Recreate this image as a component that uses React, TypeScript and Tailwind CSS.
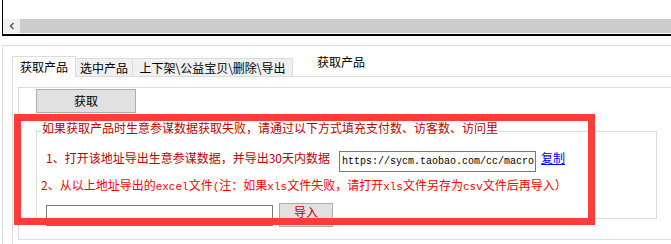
import React from "react";

const M = ({ children }: { children: React.ReactNode }) => (
  <span className="font-['Liberation_Mono',monospace] text-[11px]">{children}</span>
);

export default function App() {
  return (
    <div className="relative w-[671px] h-[244px] overflow-hidden bg-white font-['Noto_Sans_CJK_SC',sans-serif] text-[12px] text-black">
      {/* top strip with horizontal scrollbar */}
      <div className="ml-[2px] h-[36px] border-l border-b-2 border-black pt-[19px]">
        <div className="flex h-[14px] bg-[#cdcdcd]">
          <div className="flex w-[17px] items-center justify-center bg-[#f0f0f0]">
            <svg width="8" height="8" viewBox="0 0 8 8">
              <path d="M5.5 1 L2.5 4 L5.5 7" fill="none" stroke="#606060" strokeWidth="1.6" />
            </svg>
          </div>
          <div className="flex-1" />
        </div>
      </div>

      {/* outer group */}
      <div className="ml-[2px] mt-[9px] h-[199px] border-l border-t border-[#dcdcdc] pl-[9px] pt-[10px]">
        {/* tab row */}
        <div className="flex w-[720px] items-end border-b border-[#dcdcdc]">
          <div className="-mb-px flex h-[21px] w-[64px] items-center justify-center border border-b-0 border-[#dcdcdc] bg-white leading-[14px]">
            获取产品
          </div>
          <div className="flex h-[18px] w-[57px] items-center justify-center border-t border-r border-[#dcdcdc] bg-[#f0f0f0] leading-[14px]">
            选中产品
          </div>
          <div className="flex h-[18px] w-[160px] items-center justify-center border-t border-r border-[#dcdcdc] bg-[#f0f0f0] leading-[14px]">
            上下架\公益宝贝\删除\导出
          </div>
          <div className="ml-[24px] -mt-[1px] self-start leading-[14px]">获取产品</div>
        </div>

        {/* tab panel */}
        <div className="h-[200px] border-l border-[#dcdcdc] pl-[5px] pt-[10px]">
          <div className="h-[153px] w-[700px] border-l border-t border-b border-[#dcdcdc]">
            <button className="ml-[17px] mt-[1px] flex h-[24px] w-[100px] items-center justify-center border border-[#adadad] bg-[#e1e1e1] leading-[14px]">
              获取
            </button>

            {/* group box */}
            <div className="relative ml-[17px] mt-[18px] h-[88px] w-[621px] border border-[#dcdcdc]">
              <span className="absolute left-[4px] top-[-11px] bg-white px-px leading-[14px] text-[#c00000]">
                如果获取产品时生意参谋数据获取失败，请通过以下方式填充支付数、访客数、访问里
              </span>

              <div className="ml-[9px] mt-[19px] flex items-start">
                <span className="leading-[14px] text-[#c00000]">1、打开该地址导出生意参谋数据，并导出30天内数据</span>
                <div className="ml-[9px] flex h-[21px] w-[197px] items-center overflow-hidden border border-[#7a7a7a] px-[2px]">
                  <span className="whitespace-nowrap font-['Liberation_Mono',monospace] text-[10px]">
                    https://sycm.taobao.com/cc/macro
                  </span>
                </div>
                <a className="ml-[5px] leading-[14px] text-[#0000ff] underline">复制</a>
              </div>

              <div className="ml-[4px] mt-[6px] whitespace-nowrap leading-[14px] text-[#ff0000]">
                2、从以上地址导出的<M>excel</M>文件<M>(</M>注：如果<M>xls</M>文件失败，请打开<M>xls</M>文件另存为<M>csv</M>文件后再导入）
              </div>

              <div className="mt-[9px] flex items-start">
                <div className="ml-[9px] mt-[2px] h-[21px] w-[227px] border border-[#7a7a7a] bg-white" />
                <button className="ml-[6px] flex h-[24px] w-[54px] items-start justify-center border border-[#adadad] bg-[#e1e1e1] pt-[1px] leading-[14px] text-[#c00000]">
                  导入
                </button>
              </div>
            </div>
          </div>
        </div>
      </div>

      {/* red annotation rectangle */}
      <div className="absolute left-[14px] top-[114px] h-[111px] w-[581px] border-[7px] border-[#ff3b3b]" />
    </div>
  );
}
